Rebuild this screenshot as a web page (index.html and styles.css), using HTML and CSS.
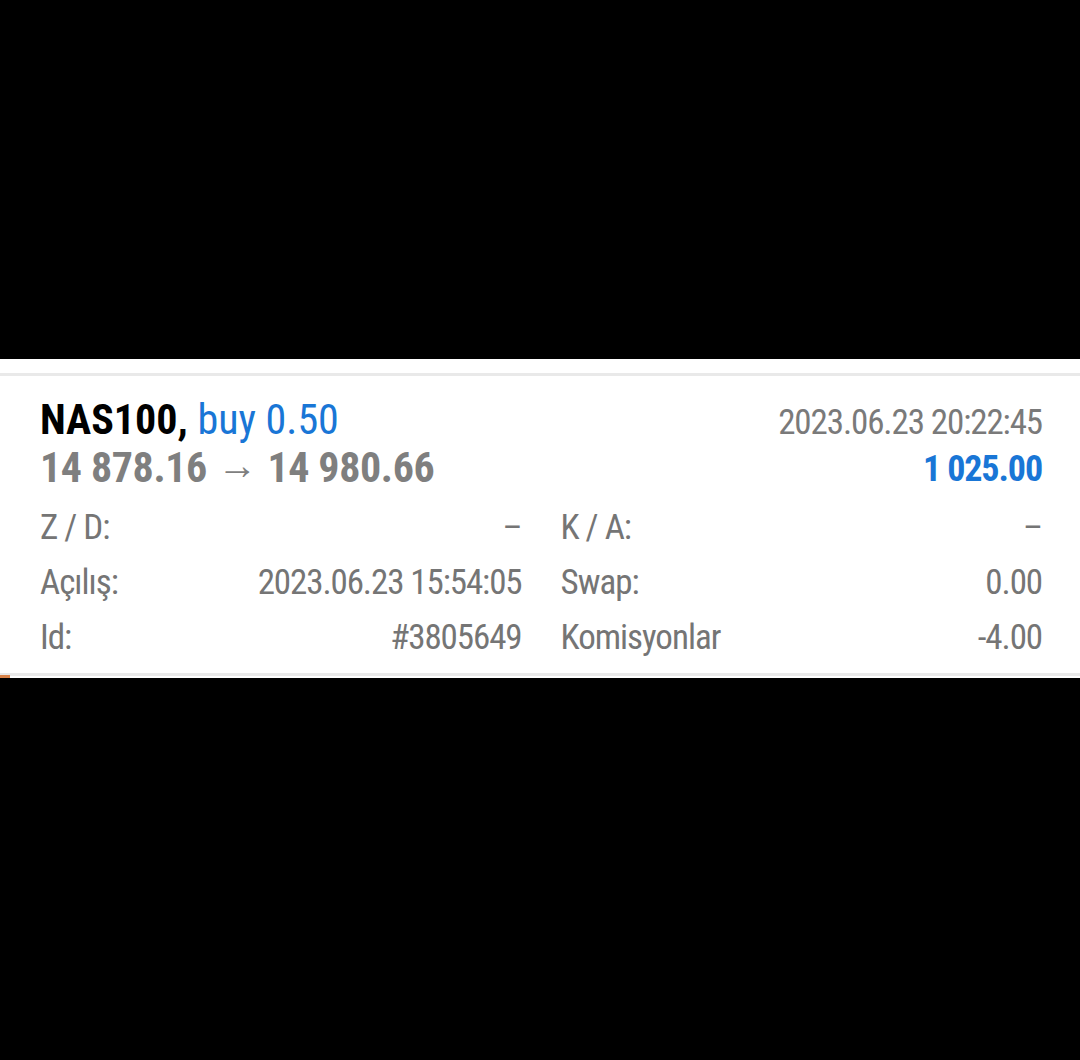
FILE: index.html
```html
<!DOCTYPE html>
<html>
<head>
<meta charset="utf-8">
<link rel="stylesheet" href="styles.css">
</head>
<body>
<div class="screen">
  <div class="blank-top"></div>
  <section class="card">
    <div class="rule"></div>
    <div class="head">
      <div class="head-left">
        <div class="title"><span class="sym">NAS100,</span> <span class="side">buy 0.50</span></div>
        <div class="prices">14 878.16 <span class="arrow">→</span> 14 980.66</div>
      </div>
      <div class="head-right">
        <div class="time">2023.06.23 20:22:45</div>
        <div class="profit">1 025.00</div>
      </div>
    </div>
    <div class="fields">
      <div class="field"><span class="lbl">Z / D:</span><span class="val">–</span></div>
      <div class="field"><span class="lbl">K / A:</span><span class="val">–</span></div>
      <div class="field"><span class="lbl">Açılış:</span><span class="val">2023.06.23 15:54:05</span></div>
      <div class="field"><span class="lbl">Swap:</span><span class="val">0.00</span></div>
      <div class="field"><span class="lbl">Id:</span><span class="val">#3805649</span></div>
      <div class="field"><span class="lbl">Komisyonlar</span><span class="val">-4.00</span></div>
    </div>
    <div class="rule bottom"><span class="mark"></span></div>
  </section>
  <div class="blank-bottom"></div>
</div>
</body>
</html>
```
FILE: styles.css
```css
html,body{margin:0;padding:0;background:#000}
.screen{display:flex;flex-direction:column;height:1060px;font-family:"Roboto Condensed",Roboto,"Liberation Sans",sans-serif}
.blank-top{height:359px;background:#000}
.blank-bottom{flex:1;background:#000}
.card{background:#fff;height:319px;display:flex;flex-direction:column;padding-top:14px;box-sizing:border-box}
.rule{height:3px;background:#e9e9e9}
.rule.bottom{position:relative;margin-top:auto;margin-bottom:2px}
.mark{position:absolute;left:0;top:2px;width:10px;height:3px;background:#d9834a}
.head{display:flex;justify-content:space-between;padding:20px 38px 0 40px}
.title{font-size:42px;line-height:48px;color:#000}
.sym{font-weight:700}
.side{color:#1976d6}
.prices{font-size:42px;line-height:48px;font-weight:700;letter-spacing:-0.4px;color:#7f7f7f}
.arrow{display:inline-block;font-weight:400;font-size:40px;line-height:40px;vertical-align:3px;letter-spacing:0;margin:0 1px}
.head-right{text-align:right;padding-top:3px}
.time{font-size:35px;line-height:48px;letter-spacing:-1.1px;color:#7a7a7a}
.profit{font-size:36px;line-height:44px;font-weight:700;letter-spacing:-1.1px;color:#1976d6}
.fields{display:grid;grid-template-columns:1fr 1fr;column-gap:39px;padding:8px 38px 0 40px}
.field{display:flex;justify-content:space-between;font-size:35px;line-height:55px;letter-spacing:-1px;color:#757575}
.val{letter-spacing:-1.1px}
```
